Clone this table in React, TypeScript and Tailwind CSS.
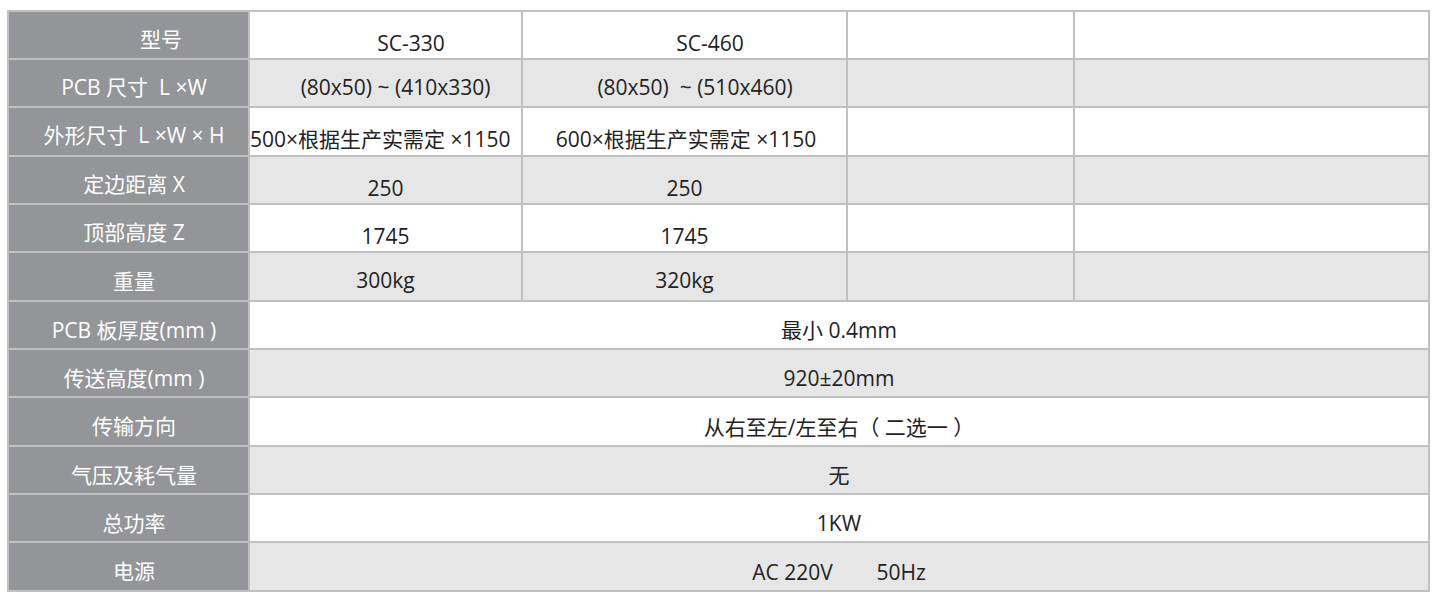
const rows = [
  { label: "型号", lp: "pl-[65px] pt-[10px]", cells: [["SC-330", "pl-[51px] pt-[17px]"], ["SC-460", "pl-[51px] pt-[17px]"], ["", ""], ["", ""]] },
  { label: "PCB 尺寸  L ×W", lp: "pl-[11px] pt-[9px]", cells: [["(80x50) ~ (410x330)", "pl-[20px] pt-[9px]"], ["(80x50)  ~ (510x460)", "pl-[21px] pt-[9px]"], ["", ""], ["", ""]] },
  { label: "外形尺寸  L ×W × H", lp: "pl-[11px] pt-[9px]", cells: [["500×根据生产实需定 ×1150", "justify-start! pt-[17px]"], ["600×根据生产实需定 ×1150", "pl-[3px] pt-[17px]"], ["", ""], ["", ""]] },
  { label: "定边距离 X", lp: "pl-[11px] pt-[9px]", cells: [["250", "pt-[17px]"], ["250", "pt-[17px]"], ["", ""], ["", ""]] },
  { label: "顶部高度 Z", lp: "pl-[11px] pt-[9px]", cells: [["1745", "pt-[17px]"], ["1745", "pt-[17px]"], ["", ""], ["", ""]] },
  { label: "重量", lp: "pl-[11px] pt-[11px]", cells: [["300kg", "pt-[9px]"], ["320kg", "pt-[9px]"], ["", ""], ["", ""]] },
];

const wide = [
  { label: "PCB 板厚度(mm )", value: "最小 0.4mm" },
  { label: "传送高度(mm )", value: "920±20mm" },
  { label: "传输方向", value: "从右至左/左至右（ 二选一 ）" },
  { label: "气压及耗气量", value: "无" },
  { label: "总功率", value: "1KW" },
  { label: "电源", value: "AC 220V        50Hz" },
];

function Label({ text, pad }: { text: string; pad: string }) {
  return (
    <div className={`flex items-center justify-center bg-[#939598] text-white text-[21px] whitespace-pre ${pad}`}>
      {text}
    </div>
  );
}

export default function App() {
  return (
    <div className="min-h-screen bg-white pt-[10px] pl-[7px] font-['Open_Sans','Noto_Sans_CJK_SC',sans-serif]">
      <div className="grid w-[1423px] grid-cols-[239px_271px_323px_225px_353px] grid-rows-[46px_46px_47px_46px_46px_47px_46px_46px_47px_46px_46px_47px] gap-[2px] bg-[#c0c0c0] p-[2px] text-[#222222]">
        {rows.map((row, i) => {
          const bg = i % 2 === 0 ? "bg-white" : "bg-[#e6e6e6]";
          return (
            <>
              <Label key={`l${i}`} text={row.label} pad={row.lp} />
              {row.cells.map(([text, pad], j) => (
                <div
                  key={`c${i}-${j}`}
                  className={`flex items-center justify-center overflow-visible whitespace-pre text-[21px] ${bg} ${pad}`}
                >
                  {text}
                </div>
              ))}
            </>
          );
        })}
        {wide.map((row, i) => {
          const bg = i % 2 === 0 ? "bg-white" : "bg-[#e6e6e6]";
          return (
            <>
              <Label key={`wl${i}`} text={row.label} pad="pl-[11px] pt-[11px]" />
              <div
                key={`wv${i}`}
                className={`col-span-4 flex items-center justify-center whitespace-pre pt-[12px] text-[21px] ${bg}`}
              >
                {row.value}
              </div>
            </>
          );
        })}
      </div>
    </div>
  );
}
